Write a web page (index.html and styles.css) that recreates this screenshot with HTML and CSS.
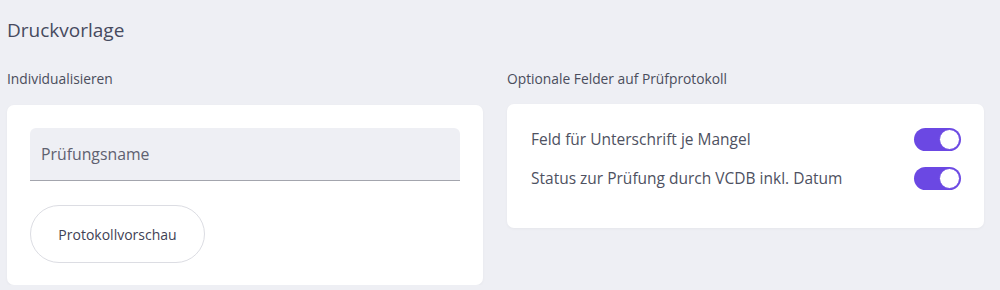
FILE: index.html
```html
<!DOCTYPE html>
<html lang="de">
<head>
  <meta charset="UTF-8">
  <title>Druckvorlage</title>
  <link rel="stylesheet" href="styles.css">
</head>
<body>
  <div class="page">
    <h1>Druckvorlage</h1>
    <div class="columns">
      <section class="column">
        <h2>Individualisieren</h2>
        <div class="card card-left">
          <div class="field">
            <input type="text" placeholder="Prüfungsname">
          </div>
          <button class="preview">Protokollvorschau</button>
        </div>
      </section>
      <section class="column">
        <h2 class="tight">Optionale Felder auf Prüfprotokoll</h2>
        <div class="card card-right">
          <div class="option">
            <span>Feld für Unterschrift je Mangel</span>
            <span class="toggle on"><span class="knob"></span></span>
          </div>
          <div class="option">
            <span>Status zur Prüfung durch VCDB inkl. Datum</span>
            <span class="toggle on"><span class="knob"></span></span>
          </div>
        </div>
      </section>
    </div>
  </div>
</body>
</html>
```

FILE: styles.css
```css
body {
  margin: 0;
  background: #eeeff4;
  font-family: 'Open Sans', sans-serif;
  color: #4a4d5c;
}
.page {
  padding: 16px 16px 0 7px;
}
h1 {
  margin: 0;
  font-size: 19px;
  font-weight: 400;
  line-height: 28px;
  color: #464a5e;
}
.columns {
  display: grid;
  grid-template-columns: 476px 477px;
  gap: 24px;
  margin-top: 25px;
}
h2 {
  margin: 0 0 16px;
  font-size: 13.8px;
  font-weight: 400;
  line-height: 20px;
  color: #4a4d5c;
}
h2.tight {
  margin-bottom: 15px;
}
.card {
  background: #ffffff;
  border-radius: 7px;
  box-shadow: 0 1px 3px rgba(0, 0, 0, 0.04);
}
.card-left {
  height: 180px;
  box-sizing: border-box;
  padding: 23px 23px 0 23px;
}
.field input {
  display: block;
  width: 100%;
  box-sizing: border-box;
  height: 53px;
  border: none;
  border-bottom: 1px solid #a3a5ad;
  border-radius: 6px 6px 0 0;
  background: #eeeff4;
  padding: 0 11px;
  font-family: 'Open Sans', sans-serif;
  font-size: 15.8px;
  color: #4a4d5c;
  outline: none;
}
.field input::placeholder {
  color: #5e6170;
}
.preview {
  margin-top: 24px;
  width: 175px;
  height: 58px;
  border: 1px solid #dcdde3;
  border-radius: 29px;
  background: #ffffff;
  font-family: 'Open Sans', sans-serif;
  font-size: 14px;
  color: #3f4255;
  cursor: pointer;
}
.card-right {
  height: 124px;
  box-sizing: border-box;
  padding: 23px 23px 0 24px;
}
.option {
  display: flex;
  justify-content: space-between;
  align-items: center;
  height: 24px;
  margin-bottom: 15px;
  font-size: 15.5px;
  color: #4e5161;
}
.toggle {
  position: relative;
  width: 47px;
  height: 23px;
  border-radius: 12px;
  background: #6b48e3;
}
.knob {
  position: absolute;
  right: 1px;
  top: 1px;
  width: 21px;
  height: 21px;
  box-sizing: border-box;
  border-radius: 50%;
  background: #ffffff;
  border: 1px solid #6b48e3;
}
```
